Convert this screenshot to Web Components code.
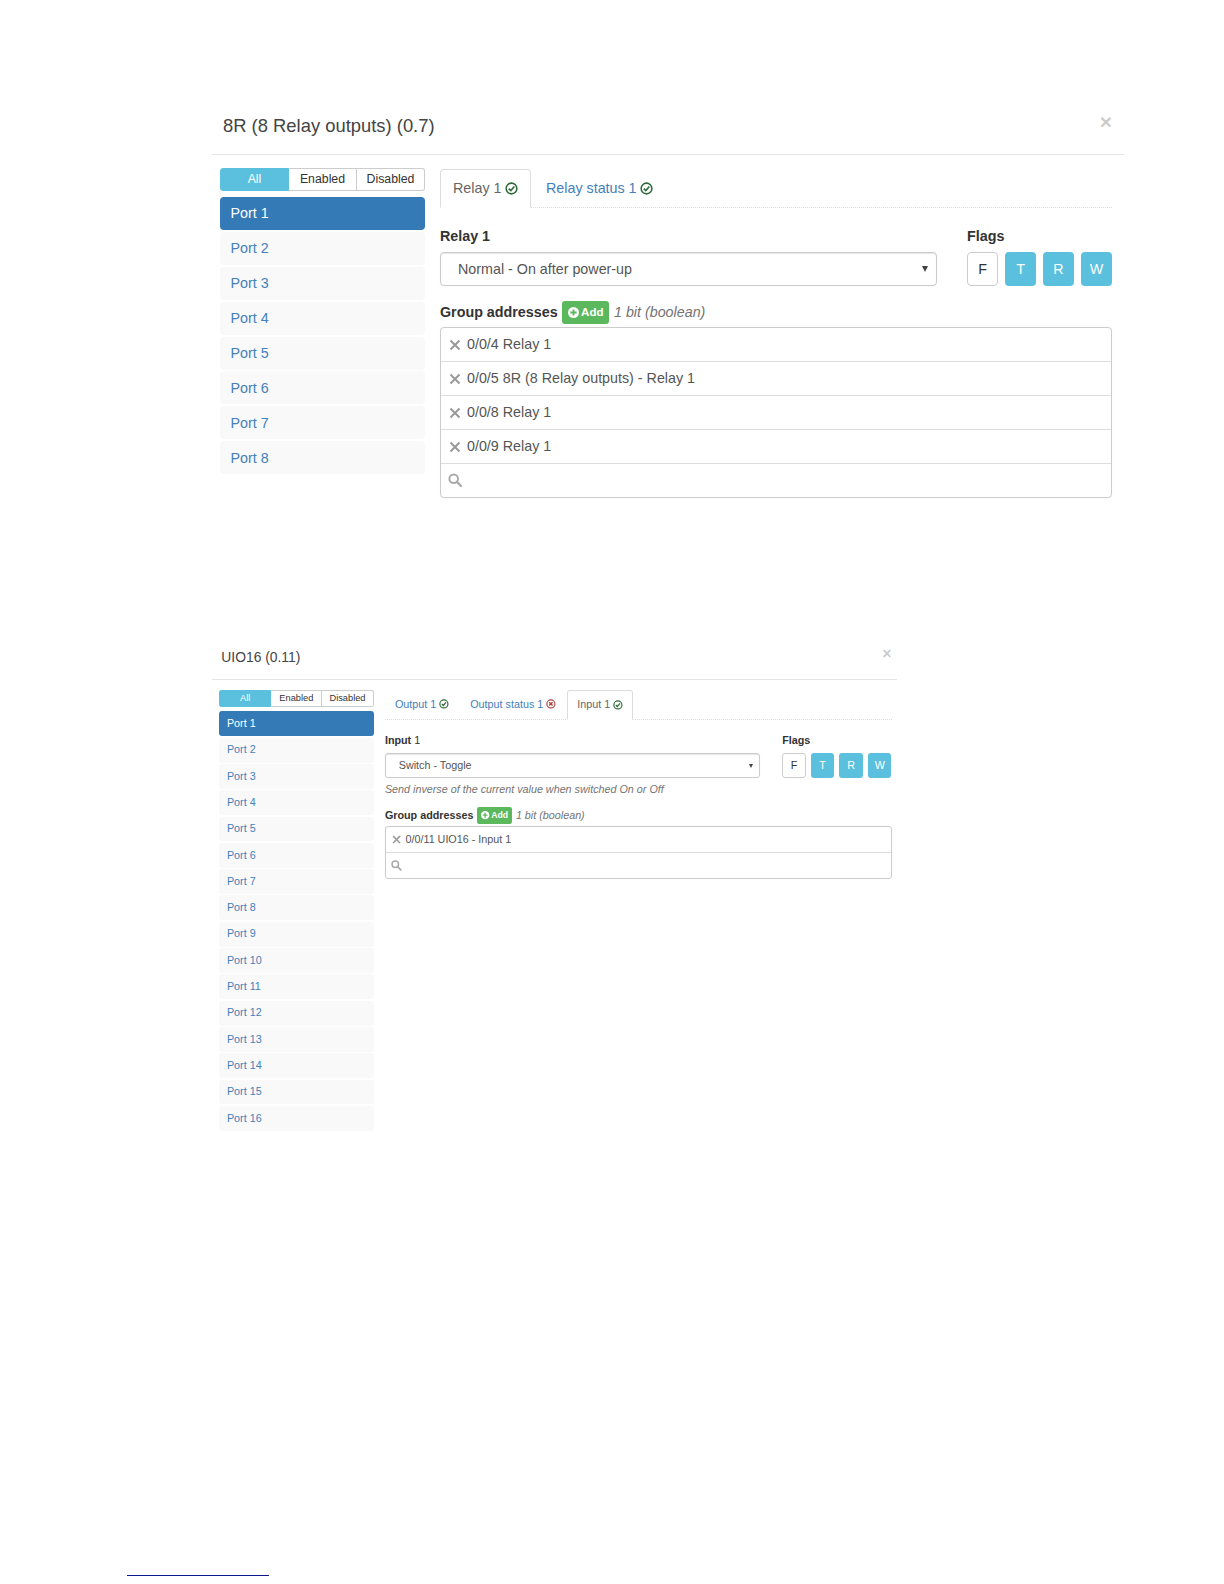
<!DOCTYPE html>
<html lang="en"><head><meta charset="utf-8"><title>Device ports</title>
<style>
html,body{margin:0;padding:0;background:#fff}
body{font-family:"Liberation Sans",Arial,sans-serif;color:#333}
</style></head>
<body>
<doc-page>
  <device-dialog heading="8R (8 Relay outputs) (0.7)" ports="8" style="--u:1;--extra:3px;--nudge:0px;--tabtop:1px;--helpgap:2px">
    <tab-strip>
      <tab-item active status="ok">Relay 1</tab-item>
      <tab-item status="ok">Relay status 1</tab-item>
    </tab-strip>
    <port-form select="Normal - On after power-up">
      <span slot="label"><b>Relay 1</b></span>
    </port-form>
    <address-box>
      <address-row>0/0/4 Relay 1</address-row>
      <address-row>0/0/5 8R (8 Relay outputs) - Relay 1</address-row>
      <address-row>0/0/8 Relay 1</address-row>
      <address-row>0/0/9 Relay 1</address-row>
    </address-box>
  </device-dialog>
  <device-dialog class="second" heading="UIO16 (0.11)" ports="16" style="--u:.754;--extra:0px;--nudge:1px;--tabtop:.5px;--helpgap:3.5px;margin-top:137.5px">
    <tab-strip>
      <tab-item status="ok">Output 1</tab-item>
      <tab-item status="err">Output status 1</tab-item>
      <tab-item active status="ok">Input 1</tab-item>
    </tab-strip>
    <port-form select="Switch - Toggle" help="Send inverse of the current value when switched On or Off">
      <span slot="label"><b>Input</b> 1</span>
    </port-form>
    <address-box>
      <address-row>0/0/11 UIO16 - Input 1</address-row>
    </address-box>
  </device-dialog>
  <foot-rule></foot-rule>
</doc-page>
<script>
const u = n => `calc(var(--u) * ${n}px)`;
function def(name, html){
  customElements.define(name, class extends HTMLElement{
    connectedCallback(){
      if(this.shadowRoot) return;
      const r=this.attachShadow({mode:'open'});
      r.innerHTML=typeof html==='function'?html(this):html;
    }
  });
}
def('doc-page',`<style>:host{display:flex;flex-direction:column;box-sizing:border-box;height:1584px;padding:96px 0 8px 212px;overflow:hidden}</style><slot></slot>`);
def('foot-rule',`<style>:host{display:block;width:142px;height:1px;background:#0b1a8c;margin:auto 0 0 -85px}</style>`);

def('device-dialog',el=>`<style>
:host{display:block;width:${u(909)};font-size:${u(14.3)};line-height:1.43;flex:none}
header{display:flex;justify-content:space-between;align-items:center;height:${u(58)};padding:0 calc(var(--u) * 9px + var(--extra) - var(--nudge)) 0 calc(var(--u) * 11px + var(--nudge));border-bottom:1px solid #e5e5e5;box-sizing:content-box;width:${u(889)}}
h4{margin:0;font-weight:normal;font-size:${u(18.4)};color:#444;line-height:1.1;padding-top:${u(2)}}
.x{font-size:${u(21)};font-weight:bold;color:#000;opacity:.2;line-height:1;margin-top:${u(-7)}}
.body{display:grid;grid-template-columns:${u(205)} ${u(672)};column-gap:${u(15)};padding:${u(13)} 0 0 calc(var(--u) * 8px + var(--nudge))}
.main{padding-top:var(--tabtop)}
</style>
<header><h4>${el.getAttribute('heading')}</h4><span class="x">×</span></header>
<div class="body"><div><filter-group></filter-group><port-list count="${el.getAttribute('ports')}"></port-list></div><div class="main"><slot></slot></div></div>`);

def('filter-group',`<style>
:host{display:flex;height:${u(23)};margin-bottom:${u(6)};font-size:${u(12.3)};color:#333}
span{flex:1;display:flex;align-items:center;justify-content:center;border:1px solid #ccc;border-left-width:0;box-sizing:border-box;background:#fff;padding-top:${u(1)}}
span:first-of-type{background:#5bc0de;border-color:#5bc0de;color:#fff;border-width:1px;border-radius:${u(3)} 0 0 ${u(3)}}
span:last-of-type{border-radius:0 ${u(3)} ${u(3)} 0}
</style><span>All</span><span>Enabled</span><span>Disabled</span>`);

def('port-list',el=>{
  const n=+el.getAttribute('count');let s='';
  for(let i=1;i<=n;i++)s+=`<a class="${i==1?'on':''}">Port ${i}</a>`;
  return `<style>
:host{display:flex;flex-direction:column;gap:${u(1.9)}}
a{display:flex;align-items:center;height:${u(33)};padding-left:${u(10.5)};background:#f9f9f9;border-radius:${u(4)};color:#4480ba}
a.on{background:#337ab7;color:#fff}
</style>${s}`;});

def('tab-strip',`<style>:host{display:flex;height:${u(38)};border-bottom:1px dotted #ddd}</style><slot></slot>`);
const ok=`<svg viewBox="0 0 16 16" fill="none" stroke="#2f6b3a" stroke-width="1.9"><circle cx="8" cy="8" r="6.6"/><path d="M4.6 8.1 7.2 10.6 11.5 5.6" stroke-width="2"/></svg>`;
const err=`<svg viewBox="0 0 16 16" fill="none" stroke="#a94442" stroke-width="1.9"><circle cx="8" cy="8" r="6.6"/><path d="M5.3 5.3 10.7 10.7M10.7 5.3 5.3 10.7" stroke-width="2.4"/></svg>`;
def('tab-item',el=>`<style>
:host{display:flex;align-items:center;gap:${u(3.5)};box-sizing:border-box;height:${u(38)};padding:0 ${u(12)};margin-right:${u(2)};border:1px solid transparent;color:#4480ba;white-space:nowrap}
:host([active]){border-color:#ddd #ddd #fff;color:#666;border-radius:${u(4)} ${u(4)} 0 0;height:calc(var(--u) * 38px + 1px)}
svg{width:${u(13)};height:${u(13)};flex:none}
</style><slot></slot>${el.getAttribute('status')==='err'?err:ok}`);

def('port-form',el=>{
  const help=el.getAttribute('help');
  return `<style>
:host{display:block;margin-top:${u(18)}}
.row{display:grid;grid-template-columns:${u(497)} ${u(145)};column-gap:${u(30)}}
.lab{height:${u(20)};margin-bottom:${u(6)};display:flex;align-items:center;font-weight:normal;color:#333}
b{font-weight:bold}
::slotted(span){color:#333}
.sel{display:flex;align-items:center;justify-content:space-between;height:${u(34)};box-sizing:border-box;padding:0 ${u(8)} 0 ${u(17)};border:1px solid #ccc;border-radius:${u(4)};box-shadow:inset 0 1px 1px rgba(0,0,0,.1),0 0 1px rgba(0,0,0,.12);color:#555}
.sel i{width:0;height:0;border-style:solid;border-width:${u(6)} ${u(3)} 0;border-color:#444 transparent transparent}
.flags{display:grid;grid-template-columns:repeat(4,${u(31)});column-gap:${u(7)};height:${u(34)}}
.flags span{display:flex;align-items:center;justify-content:center;border-radius:${u(4)};background:#5bc0de;color:#fff}
.flags span:first-child{background:#fff;border:1px solid #ccc;color:#333;box-sizing:border-box}
.help{height:${u(17)};padding-top:${u(6)};margin-bottom:var(--helpgap);font-style:italic;color:#737373;display:flex;align-items:center;box-sizing:content-box;line-height:1}
.ga{display:flex;align-items:center;gap:${u(4.5)};height:${u(22.5)};margin-top:${u(15)};margin-bottom:${u(3)}}
.ga em{color:#737373}
.add{display:flex;align-items:center;gap:${u(2)};height:100%;box-sizing:border-box;padding:0 ${u(6)};background:#5cb85c;color:#fff;border-radius:${u(3)};font-size:${u(11.5)};font-weight:bold}
.add svg{width:${u(11)};height:${u(11)}}
</style>
<div class="row"><div><div class="lab"><slot name="label"></slot></div><div class="sel"><span>${el.getAttribute('select')}</span><i></i></div></div>
<div><div class="lab"><b>Flags</b></div><div class="flags"><span>F</span><span>T</span><span>R</span><span>W</span></div></div></div>
${help?`<div class="help">${help}</div>`:''}
<div class="ga"><b>Group addresses</b><span class="add"><svg viewBox="0 0 12 12"><circle cx="6" cy="6" r="6" fill="#fff"/><path d="M6 2.6v6.8M2.6 6h6.8" stroke="#5cb85c" stroke-width="2"/></svg>Add</span><em>1 bit (boolean)</em></div>`;});

def('address-box',`<style>
:host{display:block;border:1px solid #ccc;border-radius:${u(4)};box-shadow:0 0 1px rgba(0,0,0,.1)}
.s{display:flex;align-items:center;height:${u(33)};padding-left:${u(7)}}
svg{width:${u(14)};height:${u(14)}}
</style><slot></slot><div class="s"><svg viewBox="0 0 14 14" fill="none" stroke="#aaa" stroke-width="2"><circle cx="5.7" cy="5.7" r="4.3"/><path d="M9 9l4 4" stroke-width="2.4" stroke-linecap="round"/></svg></div>`);

def('address-row',`<style>
:host{display:flex;align-items:center;gap:${u(6)};box-sizing:border-box;height:${u(34)};padding:${u(1)} 0 0 ${u(8)};border-bottom:1px solid #ddd;color:#555}
svg{width:${u(12)};height:${u(12)};flex:none}
</style><svg viewBox="0 0 12 12" stroke="#999" stroke-width="2"><path d="M1.5 1.5l9 9M10.5 1.5l-9 9"/></svg><slot></slot>`);
</script>
</body></html>
